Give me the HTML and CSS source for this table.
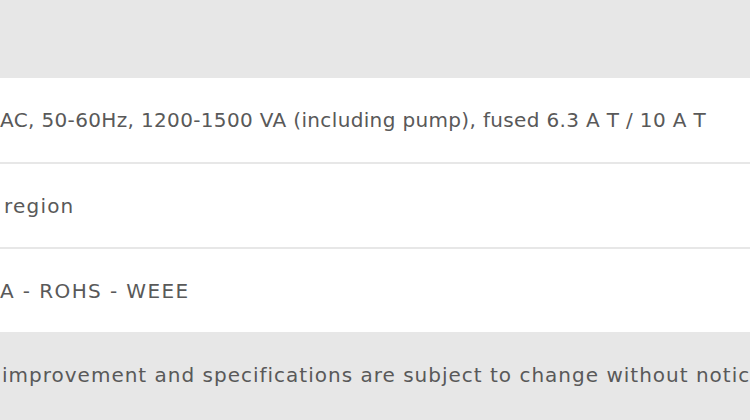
FILE: index.html
```html
<!DOCTYPE html>
<html>
<head>
<meta charset="utf-8">
<link rel="stylesheet" href="styles.css">
</head>
<body>
<div class="page">
  <div class="top"></div>
  <div class="table">
    <div class="row"><span class="t1">AC, 50-60Hz, 1200-1500 VA (including pump), fused 6.3 A T / 10 A T</span></div>
    <div class="row"><span class="t2">region</span></div>
    <div class="row"><span class="t3">A - ROHS - WEEE</span></div>
  </div>
  <div class="note"><span class="t4">improvement and specifications are subject to change without notice.</span></div>
</div>
</body>
</html>
```
FILE: styles.css
```css
html, body {
  margin: 0;
  padding: 0;
  background: #e7e7e7;
  overflow: hidden;
}
.page {
  width: 750px;
  height: 420px;
  display: flex;
  flex-direction: column;
  font-family: "DejaVu Sans", sans-serif;
  font-size: 20px;
  letter-spacing: 1px;
  color: #595959;
  white-space: nowrap;
  overflow: hidden;
}
.top {
  height: 78px;
  flex: none;
}
.table {
  background: #fff;
  display: flex;
  flex-direction: column;
}
.row {
  height: 83px;
  display: flex;
  align-items: center;
  border-top: 2px solid #e7e7e7;
}
.row:first-child {
  height: 84px;
  border-top: none;
}
.t1 {
  letter-spacing: 0.35px;
}
.t2 {
  padding-left: 4px;
  letter-spacing: 1.2px;
}
.t3 {
  letter-spacing: 1.4px;
}
.note {
  flex: 1;
  display: flex;
  align-items: center;
  padding-bottom: 2px;
}
.t4 {
  padding-left: 2px;
}
```
